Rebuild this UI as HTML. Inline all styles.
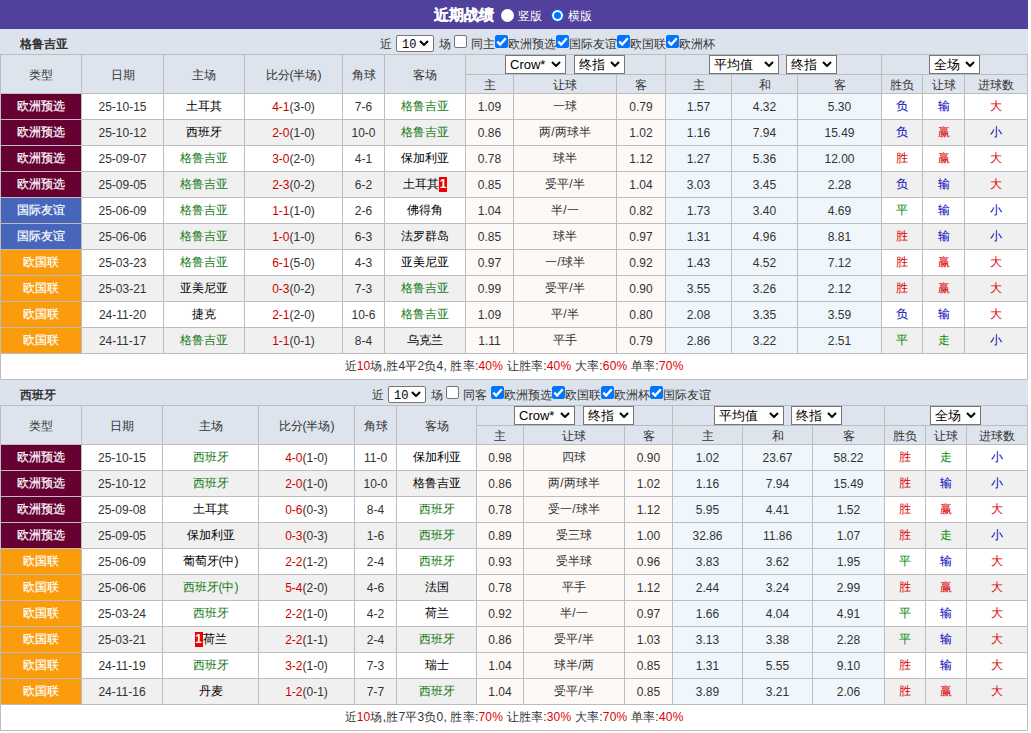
<!DOCTYPE html>
<html><head><meta charset="utf-8"><title>近期战绩</title>
<style>
*{box-sizing:border-box}
html,body{margin:0;padding:0;background:#fff}
body{font-family:"Liberation Sans",sans-serif;font-size:12px;color:#333}
#wrap{position:relative;width:1028px;height:733px;overflow:hidden}
.top{position:absolute;left:0;top:0;width:1028px;height:29px;background:#51419d;color:#fff;white-space:nowrap}
.top .ttl{position:absolute;top:6px;font-size:15px;line-height:18px;font-weight:bold;-webkit-text-stroke:0.3px #fff}
.top .rd{position:absolute;top:9px;width:13px;height:13px;border-radius:50%;background:#fff}
.top .rd.on{background:#0075ff;border:1px solid #0075ff;box-shadow:inset 0 0 0 2px #fff}
.top .rl{position:absolute;top:9px;font-size:12px;line-height:15px}
.bar{position:absolute;left:0;width:1028px;height:25px;background:#dce3ec;}
.bar .tm{position:absolute;left:20px;top:8px;font-size:12px;line-height:14px;color:#333}
.ct{position:absolute;top:8px;font-size:12px;line-height:15px;color:#333;white-space:nowrap}
.nsel{position:absolute;top:6px;width:38px;height:17px;border:1px solid #767676;border-radius:2px;background:#fff;color:#000;font-family:'Liberation Mono',monospace;font-size:12px;line-height:15px;padding-left:5px;padding-top:2px}
.nsel svg{position:absolute;left:22px;top:4px}
.cb{position:absolute;top:6px;width:13px;height:13px;border:1px solid #767676;border-radius:2px;background:#fff}
.cb.on{background:#0075ff;border-color:#0075ff}
.cb svg{position:absolute;left:-1px;top:-1px}
.sel{position:absolute;height:19px;border:1px solid #767676;background:#fff;color:#000;font-size:13px;line-height:17px;text-align:left;padding-left:4px;white-space:nowrap}
.sel svg{position:absolute;right:4px;top:5px}
.tb{position:absolute;left:0;border-collapse:collapse;table-layout:fixed;width:1028px}
.tb th,.tb td{border:1px solid #bdbdbd;padding:0;text-align:center;white-space:nowrap;overflow:hidden}
.tb th{background:#dde4ed;font-weight:normal;color:#333;font-size:12px;padding-top:2px;line-height:15px}
.tb tr.h1{height:20px}
.tb tr.h2{height:19px}
.tb tr.d{height:26px}
.tb tr.sum{height:26px}
.tb td{font-size:12px;color:#333}
.tb tr.even td{background:#f0f0f0}
.tb td.o1{background:#fdf9f6 !important}
.tb td.o2{background:#eff7fc !important}
.tb td.t1,.tb td.t2,.tb td.t3{-webkit-text-stroke:0.2px #fff}
.tb td.t1{background:#660033 !important;color:#fff}
.tb td.t2{background:#4765bb !important;color:#fff}
.tb td.t3{background:#fa9c0c !important;color:#fff}
.tb td.gr{color:#167a16}
.tb td.bk{color:#000}
.tb .sc{color:#c00}
.tb td.r{color:#d00}
.tb td.g{color:#080}
.tb td.b{color:#00b}
.tb .rc{display:inline-block;width:8px;background:#e00;color:#fff;font-weight:bold;line-height:15px;text-align:center;overflow:hidden;vertical-align:-4px}
.tb tr.sum td{background:#fff;padding-left:0;letter-spacing:0.2px}
.tb em{font-style:normal;color:#d00}

</style></head><body>
<div id="wrap">
<div class="top"><span class="ttl" style="left:434px">近期战绩</span><span class="rd" style="left:501px"></span><span class="rl" style="left:518px">竖版</span><span class="rd on" style="left:551px"></span><span class="rl" style="left:568px">横版</span></div>
<div class="bar" style="top:29px"><b class="tm">格鲁吉亚</b><span class="ct" style="left:380px">近</span><span class="nsel" style="left:396px">10<svg width="10" height="6" viewBox="0 0 10 6"><polyline points="1,1 5,5 9,1" fill="none" stroke="#000" stroke-width="2"/></svg></span><span class="ct" style="left:438.5px">场</span><span class="cb" style="left:454px"></span><span class="ct" style="left:471px">同主</span><span class="cb on" style="left:495px"><svg width="13" height="13" viewBox="0 0 13 13"><polyline points="2.3,6.6 5.2,9.6 10.8,3.3" fill="none" stroke="#fff" stroke-width="2.3"/></svg></span><span class="ct" style="left:508px">欧洲预选</span><span class="cb on" style="left:556px"><svg width="13" height="13" viewBox="0 0 13 13"><polyline points="2.3,6.6 5.2,9.6 10.8,3.3" fill="none" stroke="#fff" stroke-width="2.3"/></svg></span><span class="ct" style="left:569px">国际友谊</span><span class="cb on" style="left:617px"><svg width="13" height="13" viewBox="0 0 13 13"><polyline points="2.3,6.6 5.2,9.6 10.8,3.3" fill="none" stroke="#fff" stroke-width="2.3"/></svg></span><span class="ct" style="left:630px">欧国联</span><span class="cb on" style="left:666px"><svg width="13" height="13" viewBox="0 0 13 13"><polyline points="2.3,6.6 5.2,9.6 10.8,3.3" fill="none" stroke="#fff" stroke-width="2.3"/></svg></span><span class="ct" style="left:679px">欧洲杯</span></div>
<table class="tb" style="top:54px">
<colgroup>
<col style="width:81px">
<col style="width:82px">
<col style="width:81px">
<col style="width:98px">
<col style="width:42px">
<col style="width:81px">
<col style="width:48px">
<col style="width:103px">
<col style="width:49px">
<col style="width:66px">
<col style="width:66px">
<col style="width:84px">
<col style="width:41px">
<col style="width:42px">
<col style="width:63px">
</colgroup>
<tr class="h1"><th rowspan="2">类型</th><th rowspan="2">日期</th><th rowspan="2">主场</th><th rowspan="2">比分(半场)</th><th rowspan="2">角球</th><th rowspan="2">客场</th><th colspan="3"></th><th colspan="3"></th><th colspan="3"></th></tr>
<tr class="h2"><th>主</th><th>让球</th><th>客</th><th>主</th><th>和</th><th>客</th><th>胜负</th><th>让球</th><th>进球数</th></tr>
<tr class="d odd"><td class="t1">欧洲预选</td><td>25-10-15</td><td class="bk">土耳其</td><td><span class="sc">4-1</span>(3-0)</td><td>7-6</td><td class="gr">格鲁吉亚</td><td class="o1">1.09</td><td class="o1">一球</td><td class="o1">0.79</td><td class="o2">1.57</td><td class="o2">4.32</td><td class="o2">5.30</td><td class="b">负</td><td class="b">输</td><td class="r">大</td></tr>
<tr class="d even"><td class="t1">欧洲预选</td><td>25-10-12</td><td class="bk">西班牙</td><td><span class="sc">2-0</span>(1-0)</td><td>10-0</td><td class="gr">格鲁吉亚</td><td class="o1">0.86</td><td class="o1">两/两球半</td><td class="o1">1.02</td><td class="o2">1.16</td><td class="o2">7.94</td><td class="o2">15.49</td><td class="b">负</td><td class="r">赢</td><td class="b">小</td></tr>
<tr class="d odd"><td class="t1">欧洲预选</td><td>25-09-07</td><td class="gr">格鲁吉亚</td><td><span class="sc">3-0</span>(2-0)</td><td>4-1</td><td class="bk">保加利亚</td><td class="o1">0.78</td><td class="o1">球半</td><td class="o1">1.12</td><td class="o2">1.27</td><td class="o2">5.36</td><td class="o2">12.00</td><td class="r">胜</td><td class="r">赢</td><td class="r">大</td></tr>
<tr class="d even"><td class="t1">欧洲预选</td><td>25-09-05</td><td class="gr">格鲁吉亚</td><td><span class="sc">2-3</span>(0-2)</td><td>6-2</td><td class="bk">土耳其<span class="rc">1</span></td><td class="o1">0.85</td><td class="o1">受平/半</td><td class="o1">1.04</td><td class="o2">3.03</td><td class="o2">3.45</td><td class="o2">2.28</td><td class="b">负</td><td class="b">输</td><td class="r">大</td></tr>
<tr class="d odd"><td class="t2">国际友谊</td><td>25-06-09</td><td class="gr">格鲁吉亚</td><td><span class="sc">1-1</span>(1-0)</td><td>2-6</td><td class="bk">佛得角</td><td class="o1">1.04</td><td class="o1">半/一</td><td class="o1">0.82</td><td class="o2">1.73</td><td class="o2">3.40</td><td class="o2">4.69</td><td class="g">平</td><td class="b">输</td><td class="b">小</td></tr>
<tr class="d even"><td class="t2">国际友谊</td><td>25-06-06</td><td class="gr">格鲁吉亚</td><td><span class="sc">1-0</span>(1-0)</td><td>6-3</td><td class="bk">法罗群岛</td><td class="o1">0.85</td><td class="o1">球半</td><td class="o1">0.97</td><td class="o2">1.31</td><td class="o2">4.96</td><td class="o2">8.81</td><td class="r">胜</td><td class="b">输</td><td class="b">小</td></tr>
<tr class="d odd"><td class="t3">欧国联</td><td>25-03-23</td><td class="gr">格鲁吉亚</td><td><span class="sc">6-1</span>(5-0)</td><td>4-3</td><td class="bk">亚美尼亚</td><td class="o1">0.97</td><td class="o1">一/球半</td><td class="o1">0.92</td><td class="o2">1.43</td><td class="o2">4.52</td><td class="o2">7.12</td><td class="r">胜</td><td class="r">赢</td><td class="r">大</td></tr>
<tr class="d even"><td class="t3">欧国联</td><td>25-03-21</td><td class="bk">亚美尼亚</td><td><span class="sc">0-3</span>(0-2)</td><td>7-3</td><td class="gr">格鲁吉亚</td><td class="o1">0.99</td><td class="o1">受平/半</td><td class="o1">0.90</td><td class="o2">3.55</td><td class="o2">3.26</td><td class="o2">2.12</td><td class="r">胜</td><td class="r">赢</td><td class="r">大</td></tr>
<tr class="d odd"><td class="t3">欧国联</td><td>24-11-20</td><td class="bk">捷克</td><td><span class="sc">2-1</span>(2-0)</td><td>10-6</td><td class="gr">格鲁吉亚</td><td class="o1">1.09</td><td class="o1">平/半</td><td class="o1">0.80</td><td class="o2">2.08</td><td class="o2">3.35</td><td class="o2">3.59</td><td class="b">负</td><td class="b">输</td><td class="r">大</td></tr>
<tr class="d even"><td class="t3">欧国联</td><td>24-11-17</td><td class="gr">格鲁吉亚</td><td><span class="sc">1-1</span>(0-1)</td><td>8-4</td><td class="bk">乌克兰</td><td class="o1">1.11</td><td class="o1">平手</td><td class="o1">0.79</td><td class="o2">2.86</td><td class="o2">3.22</td><td class="o2">2.51</td><td class="g">平</td><td class="g">走</td><td class="b">小</td></tr>
<tr class="sum"><td colspan="15">近<em>10</em>场,胜4平2负4, 胜率:<em>40%</em> 让胜率:<em>40%</em> 大率:<em>60%</em> 单率:<em>70%</em></td></tr>
</table>
<span class="sel" style="left:505px;top:55px;width:61px">Crow*<svg width="10" height="6" viewBox="0 0 10 6"><polyline points="1,1 5,5 9,1" fill="none" stroke="#000" stroke-width="2"/></svg></span><span class="sel" style="left:574px;top:55px;width:51px">终指<svg width="10" height="6" viewBox="0 0 10 6"><polyline points="1,1 5,5 9,1" fill="none" stroke="#000" stroke-width="2"/></svg></span><span class="sel" style="left:709px;top:55px;width:70px">平均值<svg width="10" height="6" viewBox="0 0 10 6"><polyline points="1,1 5,5 9,1" fill="none" stroke="#000" stroke-width="2"/></svg></span><span class="sel" style="left:786px;top:55px;width:51px">终指<svg width="10" height="6" viewBox="0 0 10 6"><polyline points="1,1 5,5 9,1" fill="none" stroke="#000" stroke-width="2"/></svg></span><span class="sel" style="left:929px;top:55px;width:51px">全场<svg width="10" height="6" viewBox="0 0 10 6"><polyline points="1,1 5,5 9,1" fill="none" stroke="#000" stroke-width="2"/></svg></span>
<div class="bar" style="top:380px"><b class="tm">西班牙</b><span class="ct" style="left:372px">近</span><span class="nsel" style="left:388px">10<svg width="10" height="6" viewBox="0 0 10 6"><polyline points="1,1 5,5 9,1" fill="none" stroke="#000" stroke-width="2"/></svg></span><span class="ct" style="left:430.5px">场</span><span class="cb" style="left:446px"></span><span class="ct" style="left:463px">同客</span><span class="cb on" style="left:491px"><svg width="13" height="13" viewBox="0 0 13 13"><polyline points="2.3,6.6 5.2,9.6 10.8,3.3" fill="none" stroke="#fff" stroke-width="2.3"/></svg></span><span class="ct" style="left:504px">欧洲预选</span><span class="cb on" style="left:552px"><svg width="13" height="13" viewBox="0 0 13 13"><polyline points="2.3,6.6 5.2,9.6 10.8,3.3" fill="none" stroke="#fff" stroke-width="2.3"/></svg></span><span class="ct" style="left:565px">欧国联</span><span class="cb on" style="left:601px"><svg width="13" height="13" viewBox="0 0 13 13"><polyline points="2.3,6.6 5.2,9.6 10.8,3.3" fill="none" stroke="#fff" stroke-width="2.3"/></svg></span><span class="ct" style="left:614px">欧洲杯</span><span class="cb on" style="left:650px"><svg width="13" height="13" viewBox="0 0 13 13"><polyline points="2.3,6.6 5.2,9.6 10.8,3.3" fill="none" stroke="#fff" stroke-width="2.3"/></svg></span><span class="ct" style="left:663px">国际友谊</span></div>
<table class="tb" style="top:405px">
<colgroup>
<col style="width:81px">
<col style="width:81px">
<col style="width:96px">
<col style="width:96px">
<col style="width:42px">
<col style="width:80px">
<col style="width:47px">
<col style="width:101px">
<col style="width:48px">
<col style="width:70px">
<col style="width:70px">
<col style="width:72px">
<col style="width:41px">
<col style="width:41px">
<col style="width:61px">
</colgroup>
<tr class="h1"><th rowspan="2">类型</th><th rowspan="2">日期</th><th rowspan="2">主场</th><th rowspan="2">比分(半场)</th><th rowspan="2">角球</th><th rowspan="2">客场</th><th colspan="3"></th><th colspan="3"></th><th colspan="3"></th></tr>
<tr class="h2"><th>主</th><th>让球</th><th>客</th><th>主</th><th>和</th><th>客</th><th>胜负</th><th>让球</th><th>进球数</th></tr>
<tr class="d odd"><td class="t1">欧洲预选</td><td>25-10-15</td><td class="gr">西班牙</td><td><span class="sc">4-0</span>(1-0)</td><td>11-0</td><td class="bk">保加利亚</td><td class="o1">0.98</td><td class="o1">四球</td><td class="o1">0.90</td><td class="o2">1.02</td><td class="o2">23.67</td><td class="o2">58.22</td><td class="r">胜</td><td class="g">走</td><td class="b">小</td></tr>
<tr class="d even"><td class="t1">欧洲预选</td><td>25-10-12</td><td class="gr">西班牙</td><td><span class="sc">2-0</span>(1-0)</td><td>10-0</td><td class="bk">格鲁吉亚</td><td class="o1">0.86</td><td class="o1">两/两球半</td><td class="o1">1.02</td><td class="o2">1.16</td><td class="o2">7.94</td><td class="o2">15.49</td><td class="r">胜</td><td class="b">输</td><td class="b">小</td></tr>
<tr class="d odd"><td class="t1">欧洲预选</td><td>25-09-08</td><td class="bk">土耳其</td><td><span class="sc">0-6</span>(0-3)</td><td>8-4</td><td class="gr">西班牙</td><td class="o1">0.78</td><td class="o1">受一/球半</td><td class="o1">1.12</td><td class="o2">5.95</td><td class="o2">4.41</td><td class="o2">1.52</td><td class="r">胜</td><td class="r">赢</td><td class="r">大</td></tr>
<tr class="d even"><td class="t1">欧洲预选</td><td>25-09-05</td><td class="bk">保加利亚</td><td><span class="sc">0-3</span>(0-3)</td><td>1-6</td><td class="gr">西班牙</td><td class="o1">0.89</td><td class="o1">受三球</td><td class="o1">1.00</td><td class="o2">32.86</td><td class="o2">11.86</td><td class="o2">1.07</td><td class="r">胜</td><td class="g">走</td><td class="b">小</td></tr>
<tr class="d odd"><td class="t3">欧国联</td><td>25-06-09</td><td class="bk">葡萄牙(中)</td><td><span class="sc">2-2</span>(1-2)</td><td>2-4</td><td class="gr">西班牙</td><td class="o1">0.93</td><td class="o1">受半球</td><td class="o1">0.96</td><td class="o2">3.83</td><td class="o2">3.62</td><td class="o2">1.95</td><td class="g">平</td><td class="b">输</td><td class="r">大</td></tr>
<tr class="d even"><td class="t3">欧国联</td><td>25-06-06</td><td class="gr">西班牙(中)</td><td><span class="sc">5-4</span>(2-0)</td><td>4-6</td><td class="bk">法国</td><td class="o1">0.78</td><td class="o1">平手</td><td class="o1">1.12</td><td class="o2">2.44</td><td class="o2">3.24</td><td class="o2">2.99</td><td class="r">胜</td><td class="r">赢</td><td class="r">大</td></tr>
<tr class="d odd"><td class="t3">欧国联</td><td>25-03-24</td><td class="gr">西班牙</td><td><span class="sc">2-2</span>(1-0)</td><td>4-2</td><td class="bk">荷兰</td><td class="o1">0.92</td><td class="o1">半/一</td><td class="o1">0.97</td><td class="o2">1.66</td><td class="o2">4.04</td><td class="o2">4.91</td><td class="g">平</td><td class="b">输</td><td class="r">大</td></tr>
<tr class="d even"><td class="t3">欧国联</td><td>25-03-21</td><td class="bk"><span class="rc">1</span>荷兰</td><td><span class="sc">2-2</span>(1-1)</td><td>2-4</td><td class="gr">西班牙</td><td class="o1">0.86</td><td class="o1">受平/半</td><td class="o1">1.03</td><td class="o2">3.13</td><td class="o2">3.38</td><td class="o2">2.28</td><td class="g">平</td><td class="b">输</td><td class="r">大</td></tr>
<tr class="d odd"><td class="t3">欧国联</td><td>24-11-19</td><td class="gr">西班牙</td><td><span class="sc">3-2</span>(1-0)</td><td>7-3</td><td class="bk">瑞士</td><td class="o1">1.04</td><td class="o1">球半/两</td><td class="o1">0.85</td><td class="o2">1.31</td><td class="o2">5.55</td><td class="o2">9.10</td><td class="r">胜</td><td class="b">输</td><td class="r">大</td></tr>
<tr class="d even"><td class="t3">欧国联</td><td>24-11-16</td><td class="bk">丹麦</td><td><span class="sc">1-2</span>(0-1)</td><td>7-7</td><td class="gr">西班牙</td><td class="o1">1.04</td><td class="o1">受平/半</td><td class="o1">0.85</td><td class="o2">3.89</td><td class="o2">3.21</td><td class="o2">2.06</td><td class="r">胜</td><td class="r">赢</td><td class="r">大</td></tr>
<tr class="sum"><td colspan="15">近<em>10</em>场,胜7平3负0, 胜率:<em>70%</em> 让胜率:<em>30%</em> 大率:<em>70%</em> 单率:<em>40%</em></td></tr>
</table>
<span class="sel" style="left:514px;top:406px;width:61px">Crow*<svg width="10" height="6" viewBox="0 0 10 6"><polyline points="1,1 5,5 9,1" fill="none" stroke="#000" stroke-width="2"/></svg></span><span class="sel" style="left:583px;top:406px;width:51px">终指<svg width="10" height="6" viewBox="0 0 10 6"><polyline points="1,1 5,5 9,1" fill="none" stroke="#000" stroke-width="2"/></svg></span><span class="sel" style="left:714px;top:406px;width:70px">平均值<svg width="10" height="6" viewBox="0 0 10 6"><polyline points="1,1 5,5 9,1" fill="none" stroke="#000" stroke-width="2"/></svg></span><span class="sel" style="left:791px;top:406px;width:51px">终指<svg width="10" height="6" viewBox="0 0 10 6"><polyline points="1,1 5,5 9,1" fill="none" stroke="#000" stroke-width="2"/></svg></span><span class="sel" style="left:930px;top:406px;width:51px">全场<svg width="10" height="6" viewBox="0 0 10 6"><polyline points="1,1 5,5 9,1" fill="none" stroke="#000" stroke-width="2"/></svg></span>
</div>
</body></html>
